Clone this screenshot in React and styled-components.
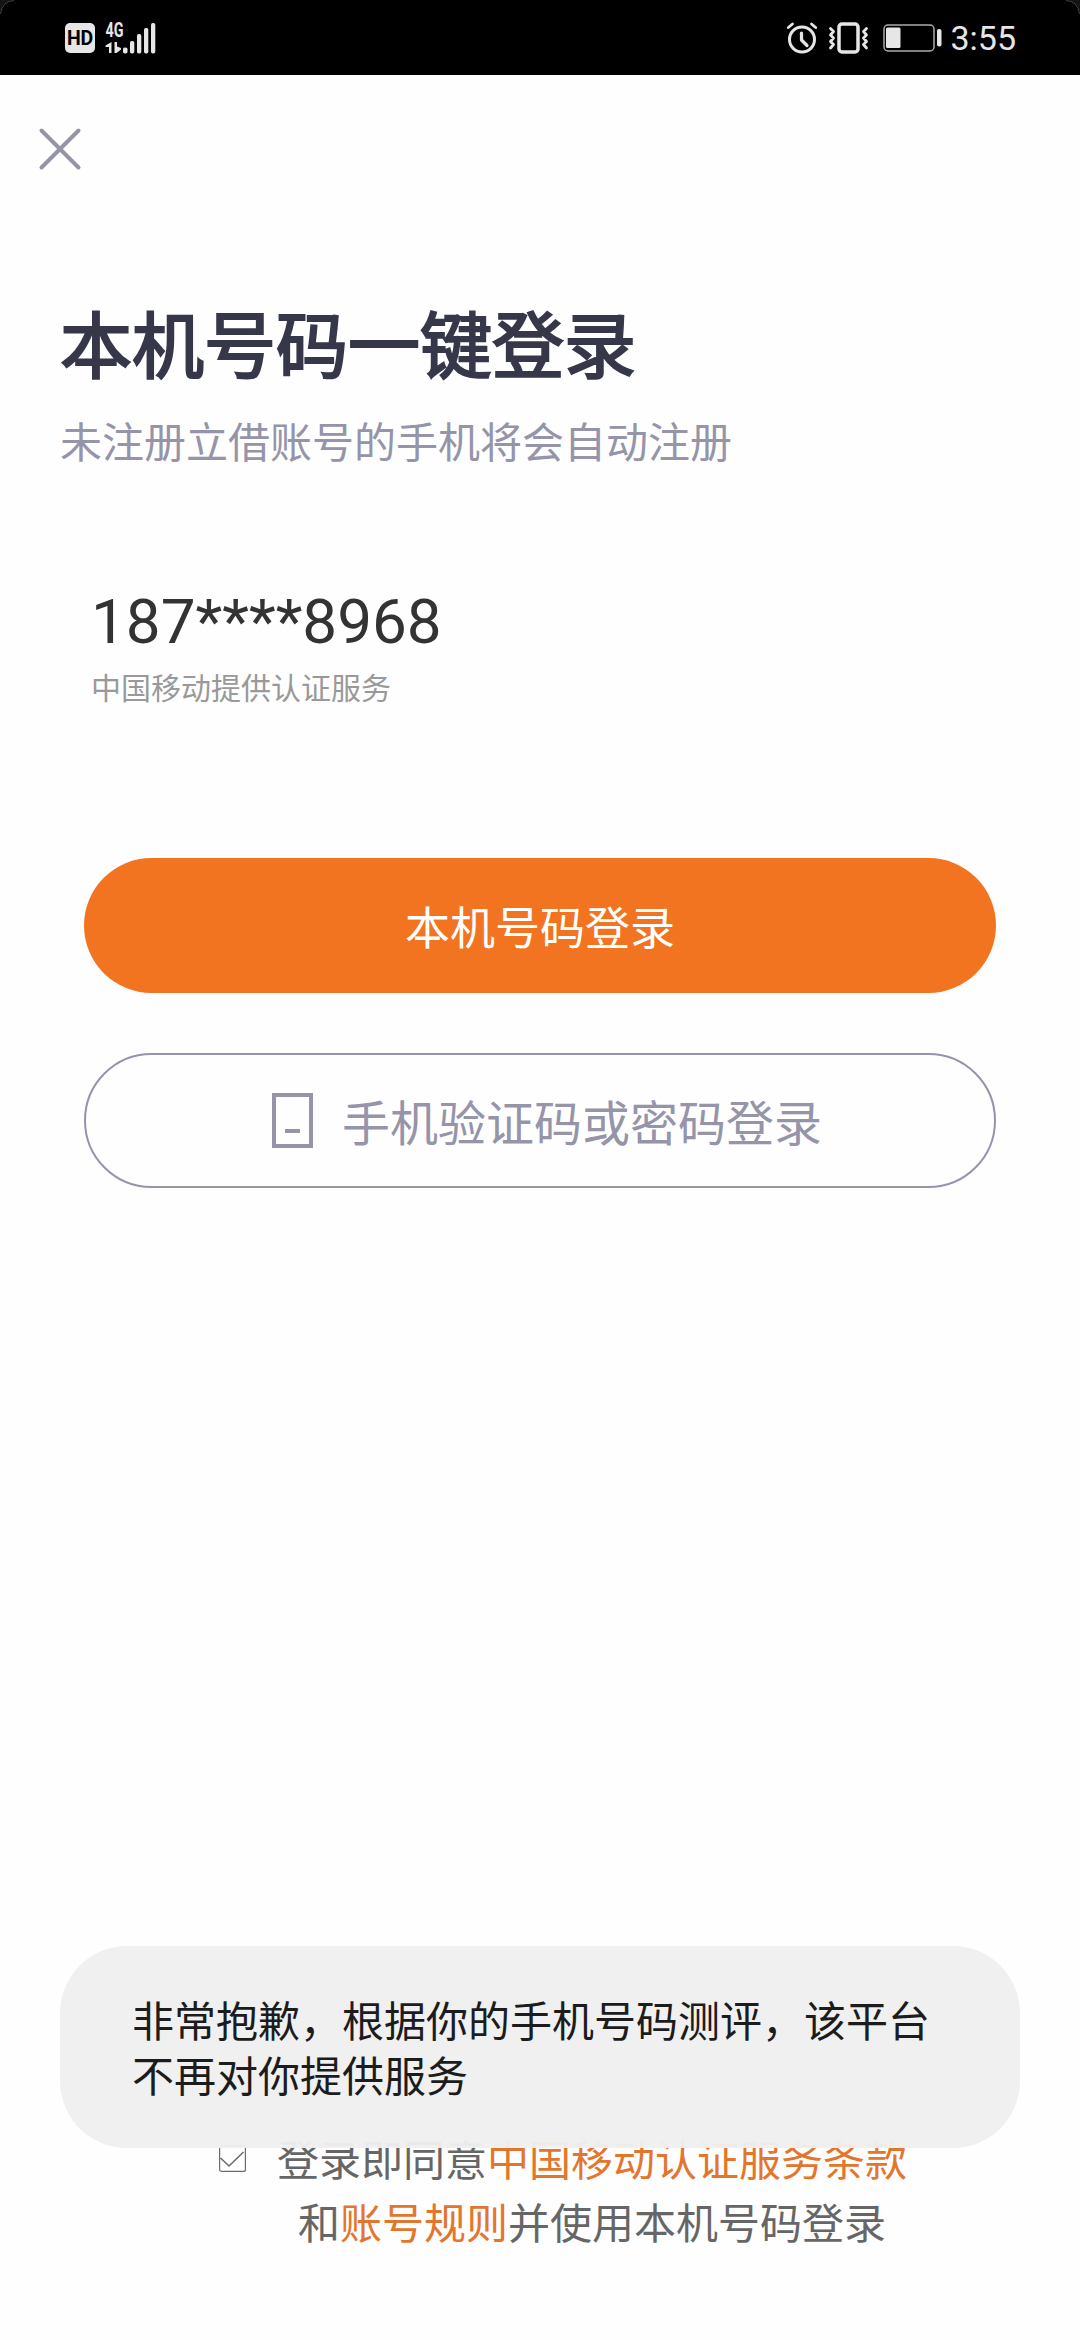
import React from "react";
import styled, { createGlobalStyle, css } from "styled-components";

const colors = {
  ink: "#36384a",
  muted: "#9594a9",
  orange: "#f27421",
  link: "#e2762d",
  status: "#e6e6e6",
};

const GlobalStyle = createGlobalStyle`
  * { box-sizing: border-box; }
  body {
    margin: 0;
    background: #fff;
    font-family: "Noto Sans CJK SC", sans-serif;
  }
  h1, p { margin: 0; }
  button { font: inherit; cursor: pointer; }
  svg { display: block; flex: none; }
`;

const Screen = styled.div`
  position: relative;
  display: flex;
  flex-direction: column;
  width: 1080px;
  height: 2340px;
  background: #fefefe;
  overflow: hidden;
`;

const StatusBar = styled.header`
  display: flex;
  align-items: center;
  justify-content: space-between;
  height: 75px;
  flex: none;
  padding: 0 65px;
  background: #000;
  color: ${colors.status};
  font-family: Roboto, sans-serif;
`;

const StatusGroup = styled.div`
  display: flex;
  align-items: center;
  gap: 10px;
`;

const HdBadge = styled.span`
  width: 30px;
  height: 30px;
  border-radius: 5px;
  background: ${colors.status};
  color: #000;
  font-size: 19.5px;
  font-weight: 700;
  letter-spacing: -0.3px;
  line-height: 31px;
  text-align: center;
`;

const BatterySlot = styled.span`
  padding-left: 4px;
`;

const Clock = styled.time`
  margin-left: -2px;
  margin-right: -1px;
  font-size: 34px;
  line-height: 40px;
`;

const NavBar = styled.nav`
  display: flex;
  height: 216px;
  flex: none;
  padding: 52px 38px;
`;

const CloseButton = styled.button`
  width: 44px;
  height: 44px;
  padding: 0;
  border: 0;
  background: none;
`;

const Heading = styled.div`
  display: flex;
  flex-direction: column;
  gap: 19px;
  padding-left: 60px;
`;

const Title = styled.h1`
  color: ${colors.ink};
  font-size: 72px;
  font-weight: 400;
  line-height: 100px;
  -webkit-text-stroke: 2.2px ${colors.ink};
`;

const Subtitle = styled.p`
  color: ${colors.muted};
  font-size: 42px;
  line-height: 60px;
`;

const Account = styled.section`
  display: flex;
  flex-direction: column;
  gap: 4px;
  padding: 112px 0 0 91px;
`;

const PhoneNumber = styled.p`
  color: #333;
  font-family: Roboto, sans-serif;
  font-size: 62px;
  line-height: 80px;
`;

const Carrier = styled.p`
  color: #999;
  font-size: 30px;
  line-height: 40px;
`;

const Actions = styled.section`
  display: flex;
  flex-direction: column;
  gap: 60px;
  padding: 152px 84px 0;
`;

const PillButton = styled.button`
  display: flex;
  align-items: center;
  justify-content: center;
  gap: 29px;
  width: 100%;
  height: 135px;
  border-radius: 68px;
  padding: 0;
  ${(p) =>
    p.$outline
      ? css`
          padding-left: 14px;
          border: 2px solid ${colors.muted};
          background: transparent;
          color: ${colors.muted};
          font-size: 48px;
        `
      : css`
          border: 0;
          background: ${colors.orange};
          color: #fff;
          font-size: 45px;
        `}
`;

const ButtonLabel = styled.span`
  padding-bottom: 2px;
`;

const Agreement = styled.footer`
  display: flex;
  align-items: flex-start;
  gap: 31px;
  margin-top: auto;
  padding: 0 0 88px 219px;
`;

const CheckBox = styled.span`
  display: flex;
  margin-top: 19px;
`;

const Terms = styled.p`
  color: #666;
  font-size: 42px;
  line-height: 63px;
  text-align: center;
`;

const TermsLink = styled.a`
  color: ${colors.link};
`;

const Toast = styled.div`
  position: absolute;
  left: 60px;
  right: 60px;
  bottom: 192px;
  padding: 45px 72px 47px;
  border-radius: 67px;
  background: rgba(239, 239, 239, 0.96);
  color: #1c1c1c;
  font-size: 42px;
  line-height: 55px;
`;

const CornerMark = styled.svg`
  position: absolute;
  top: 0;
  ${(p) => (p.$right ? "right: 0; transform: scaleX(-1);" : "left: 0;")}
`;

const Corner = ({ right }) => (
  <CornerMark $right={right} width="15" height="15" viewBox="0 0 15 15" fill="none">
    <path d="M0 0h14Q1 1 0 14Z" fill="#141414" />
    <path d="M14 .5Q2 1 .5 14" stroke="#444" />
  </CornerMark>
);

const NetworkText = styled.text`
  font: 700 19.5px Roboto, sans-serif;
`;

const SignalIcon = () => (
  <svg width="51" height="48" viewBox="0 -8 51 48" fill={colors.status}>
    <NetworkText x="0.5" y="14.500" textLength="18" lengthAdjust="spacingAndGlyphs">4G</NetworkText>
    <path d="M6.5 20v11H4v-6H.5v-1.500Z" />
    <path d="M9.500 20H12v4.500l4 1.500v1.500L11.500 31h-2Z" />
    <rect x="18" y="25.500" width="4.500" height="6" rx="1.800" />
    <rect x="25" y="19" width="4.300" height="12.500" rx="1.800" />
    <rect x="32" y="12" width="4.300" height="19.500" rx="1.800" />
    <rect x="39" y="6" width="4.300" height="25.500" rx="1.800" />
    <rect x="46" y="1" width="4.300" height="30.500" rx="1.800" />
  </svg>
);

const AlarmIcon = () => (
  <svg width="32" height="32" viewBox="0 0 32 32" fill="none" stroke={colors.status} strokeLinecap="round">
    <circle cx="16" cy="17.500" r="12.500" strokeWidth="3" />
    <path d="M15.500 11v7l5.500 5.500" strokeWidth="3.200" strokeLinejoin="round" />
    <path d="M2.300 5.500 6.500 2M29.700 5.500 25.500 2" strokeWidth="2.800" />
  </svg>
);

const VibrateIcon = () => (
  <svg width="41" height="32" viewBox="0 0 41 32" fill="none" stroke={colors.status} strokeLinecap="round" strokeLinejoin="round">
    <rect x="11" y="2" width="19" height="28" rx="3" strokeWidth="3.500" />
    <path d="m2.500 6.500 3 3-3 3.500 3 3-3 3.500 3 3-3 3.500M38.500 6.500l-3 3 3 3.500-3 3 3 3.500-3 3 3 3.500" strokeWidth="2.800" />
  </svg>
);

const BatteryIcon = () => (
  <svg width="59" height="28" viewBox="0 0 59 28" fill="none">
    <rect x="1" y="1" width="50" height="26" rx="4" stroke="#aaa" strokeWidth="1.500" />
    <rect x="3" y="3.500" width="14.500" height="20.500" rx="1.500" fill={colors.status} />
    <rect x="54" y="5" width="4.500" height="17.500" rx="2" fill={colors.status} />
  </svg>
);

const CloseIcon = () => (
  <svg width="44" height="44" viewBox="0 0 44 44" stroke={colors.muted} strokeWidth="4" strokeLinecap="round">
    <path d="m3.500 3.500 37 37M40.500 3.500l-37 37" />
  </svg>
);

const PhoneIcon = () => (
  <svg width="41" height="55" viewBox="0 0 41 55" fill="none" stroke={colors.muted} strokeWidth="4">
    <path d="M2 2h37v51H2ZM13 38h15" />
  </svg>
);

const CheckIcon = () => (
  <svg width="27" height="27" viewBox="0 0 27 27" fill="none" stroke="#6c6c6c">
    <rect x=".6" y=".6" width="25.800" height="25.800" rx="2" strokeWidth="1.200" />
    <path d="m1.500 13 8.500 8L24.500 7" strokeWidth="1.600" />
  </svg>
);

export default function App() {
  return (
    <>
      <GlobalStyle />
      <Screen>
        <StatusBar>
          <StatusGroup>
            <HdBadge>HD</HdBadge>
            <SignalIcon />
          </StatusGroup>
          <StatusGroup>
            <AlarmIcon />
            <VibrateIcon />
            <BatterySlot>
              <BatteryIcon />
            </BatterySlot>
            <Clock>3:55</Clock>
          </StatusGroup>
        </StatusBar>
        <NavBar>
          <CloseButton aria-label="关闭">
            <CloseIcon />
          </CloseButton>
        </NavBar>
        <Heading>
          <Title>本机号码一键登录</Title>
          <Subtitle>未注册立借账号的手机将会自动注册</Subtitle>
        </Heading>
        <Account>
          <PhoneNumber>187****8968</PhoneNumber>
          <Carrier>中国移动提供认证服务</Carrier>
        </Account>
        <Actions>
          <PillButton>本机号码登录</PillButton>
          <PillButton $outline>
            <PhoneIcon />
            <ButtonLabel>手机验证码或密码登录</ButtonLabel>
          </PillButton>
        </Actions>
        <Agreement>
          <CheckBox>
            <CheckIcon />
          </CheckBox>
          <Terms>
            登录即同意<TermsLink>中国移动认证服务条款</TermsLink>
            <br />
            和<TermsLink>账号规则</TermsLink>并使用本机号码登录
          </Terms>
        </Agreement>
        <Toast role="status">
          非常抱歉，根据你的手机号码测评，该平台
          <br />
          不再对你提供服务
        </Toast>
        <Corner />
        <Corner right />
      </Screen>
    </>
  );
}
